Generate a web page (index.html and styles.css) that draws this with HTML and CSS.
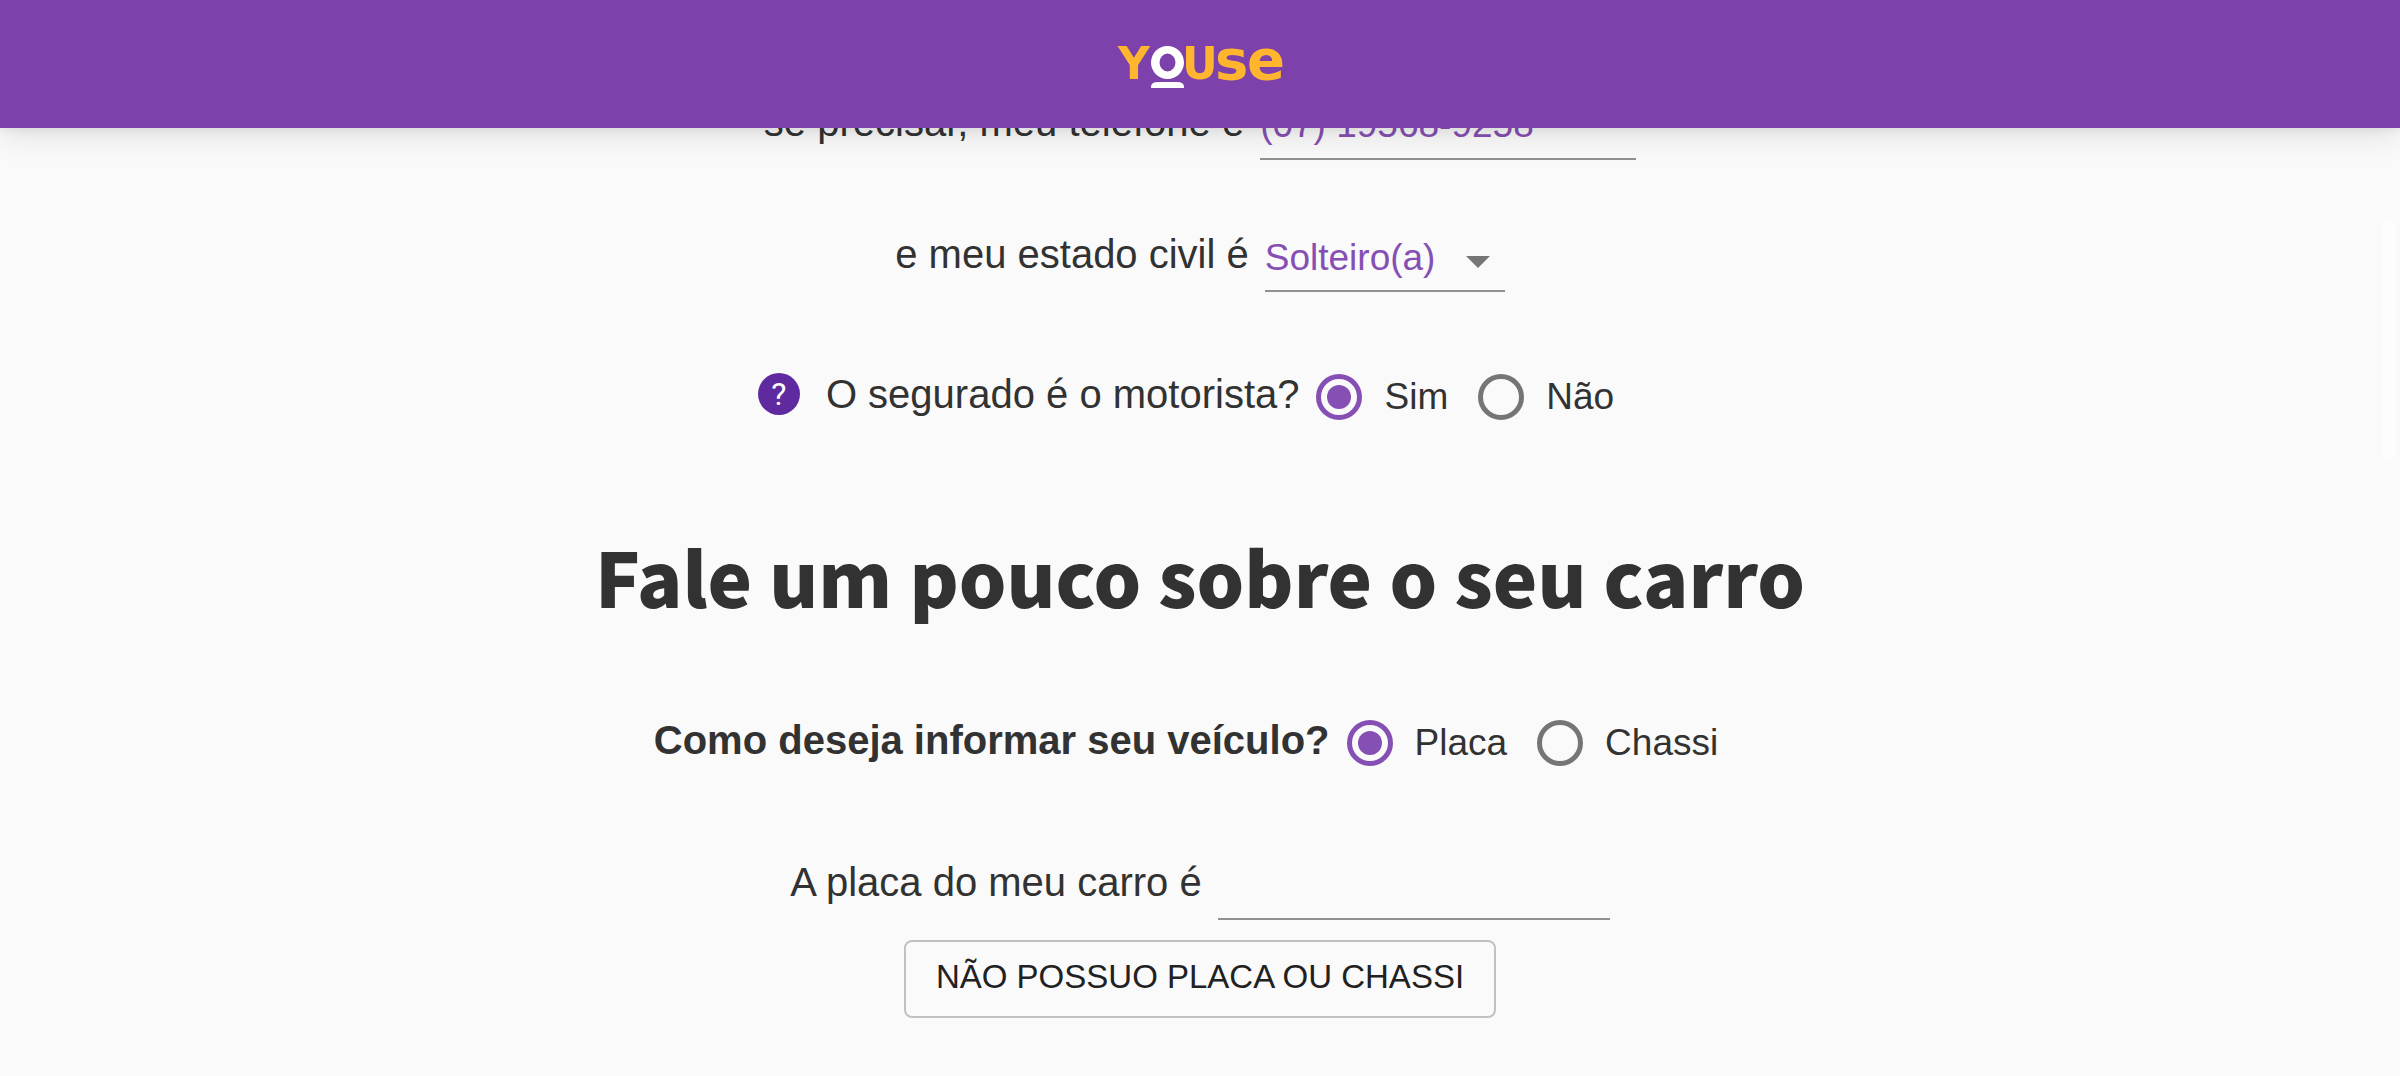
FILE: index.html
```html
<!DOCTYPE html>
<html lang="pt-BR">
<head>
<meta charset="utf-8">
<meta name="viewport" content="width=device-width, initial-scale=1">
<title>Youse</title>
<link rel="stylesheet" href="styles.css">
</head>
<body>
<header class="topbar">
  <a class="brand" href="#" aria-label="Youse">
    <svg class="brand-logo" viewBox="0 -26 168 76" width="168" height="76" aria-hidden="true">
      <g fill="#ffb52e" font-family="DejaVu Sans, sans-serif" font-weight="700">
        <text x="2" y="34" font-size="44">Y</text>
        <text x="66" y="34" font-size="44">U</text>
        <text x="99" y="34" font-size="56">s</text>
        <text x="131" y="34" font-size="56">e</text>
      </g>
      <path d="M51.500 1a16.500 16.500 0 1 0 0 33a16.500 16.500 0 1 0 0-33zM51.500 8.500a8 9 0 1 1 0 18a8 9 0 1 1 0-18z" fill="#fff" fill-rule="evenodd"/>
      <path d="M35 43v-1q0-5 7-5h19q7 0 7 5v1z" fill="#fff"/>
    </svg>
  </a>
</header>
<main class="page">
  <form>
    <section class="group">
      <div class="row field-row">
        <label class="phrase" for="phone">se precisar, meu telefone é</label>
        <input class="control phone" id="phone" type="tel" value="(07) 19568-9258">
      </div>
      <div class="row field-row">
        <label class="phrase" for="civil">e meu estado civil é</label>
        <span class="select-box">
          <select class="control civil" id="civil"><option>Solteiro(a)</option><option>Casado(a)</option></select>
          <svg class="caret" viewBox="0 0 24 12" width="24" height="12" aria-hidden="true"><path d="M0 0h24L12 12z" fill="#757575"/></svg>
        </span>
      </div>
      <div class="row choice-row" role="radiogroup" aria-labelledby="driver">
        <button class="help" type="button" aria-label="Ajuda">?</button>
        <span class="phrase" id="driver">O segurado é o motorista?</span>
        <label class="option"><input type="radio" name="driver" checked>Sim</label>
        <label class="option"><input type="radio" name="driver">Não</label>
      </div>
    </section>
    <section class="group car">
      <h2 class="title">Fale um pouco sobre o seu carro</h2>
      <div class="row choice-row" role="radiogroup" aria-labelledby="vehicle">
        <strong class="phrase" id="vehicle">Como deseja informar seu veículo?</strong>
        <label class="option"><input type="radio" name="vehicle" checked>Placa</label>
        <label class="option"><input type="radio" name="vehicle">Chassi</label>
      </div>
      <div class="row field-row">
        <label class="phrase" for="plate">A placa do meu carro é</label>
        <input class="control plate" id="plate" type="text">
      </div>
    </section>
    <button class="outlined" type="button">NÃO POSSUO PLACA OU CHASSI</button>
  </form>
</main>
<div class="scroll-thumb" aria-hidden="true"></div>
</body>
</html>
```
FILE: styles.css
```css
* { box-sizing: border-box; }
body {
  margin: 0;
  background: #fafafa;
  color: #323232;
  font-family: "Liberation Sans", Arial, sans-serif;
  overflow: hidden;
}
.topbar {
  position: fixed;
  inset: 0 0 auto;
  z-index: 2;
  height: 128px;
  display: flex;
  align-items: center;
  justify-content: center;
  background: #7d41ac;
  box-shadow: 0 4px 10px rgba(0, 0, 0, .06), 0 8px 32px rgba(0, 0, 0, .1);
}
.brand, .brand-logo { display: block; }
.brand { padding-bottom: 14px; }
.page { padding-top: 98px; }
.page form {
  display: flex;
  flex-direction: column;
  align-items: center;
}
.group {
  display: flex;
  flex-direction: column;
  align-items: center;
  gap: 70px;
}
.car { gap: 80px; margin-top: 100px; }
.row { display: flex; justify-content: center; }
.field-row { align-items: flex-end; gap: 16px; }
.choice-row { align-items: center; height: 70px; padding-right: 28px; }
.phrase { font-size: 40px; line-height: 48px; }
.field-row .phrase { padding-bottom: 14px; }
.choice-row .phrase { padding: 0 17px 6px 0; }
.control {
  height: 62px;
  padding: 0 0 6px;
  border: 0;
  border-bottom: 2px solid #919191;
  border-radius: 0;
  outline: 0;
  background: transparent;
  color: #854fb3;
  font: 37px "Liberation Sans", Arial, sans-serif;
}
.phone { width: 376px; }
.civil { width: 240px; appearance: none; }
.plate { width: 392px; }
.select-box { position: relative; display: flex; }
.caret { position: absolute; right: 15px; top: 26px; pointer-events: none; }
.help {
  width: 42px;
  height: 42px;
  margin: 0 26px 6px 0;
  padding: 0;
  border: 0;
  border-radius: 50%;
  background: #5f2a9f;
  color: #fff;
  font: 32px/42px Roboto, "Liberation Sans", sans-serif;
}
.option {
  display: flex;
  align-items: center;
  gap: 22px;
  font-size: 37px;
  line-height: 46px;
}
.option + .option { margin-left: 30px; }
.option input {
  appearance: none;
  display: grid;
  place-items: center;
  width: 46px;
  height: 46px;
  margin: 0;
  border: 5px solid #757575;
  border-radius: 50%;
}
.option input:checked { border-color: #854fb3; }
.option input:checked::before {
  content: "";
  width: 24px;
  height: 24px;
  border-radius: 50%;
  background: #854fb3;
}
.title {
  margin: -4px 0 4px;
  font: 900 75px/96px "Noto Sans CJK JP", "Noto Sans", sans-serif;
}
.outlined {
  margin-top: 20px;
  height: 78px;
  padding: 0 30px 4px;
  border: 2px solid #c1c1c1;
  border-radius: 8px;
  background: transparent;
  color: #212121;
  font: 33px "Liberation Sans", Arial, sans-serif;
}
.scroll-thumb {
  position: fixed;
  top: 220px;
  right: 4px;
  width: 14px;
  height: 240px;
  border-radius: 7px;
  background: #fdfdfd;
}
```
